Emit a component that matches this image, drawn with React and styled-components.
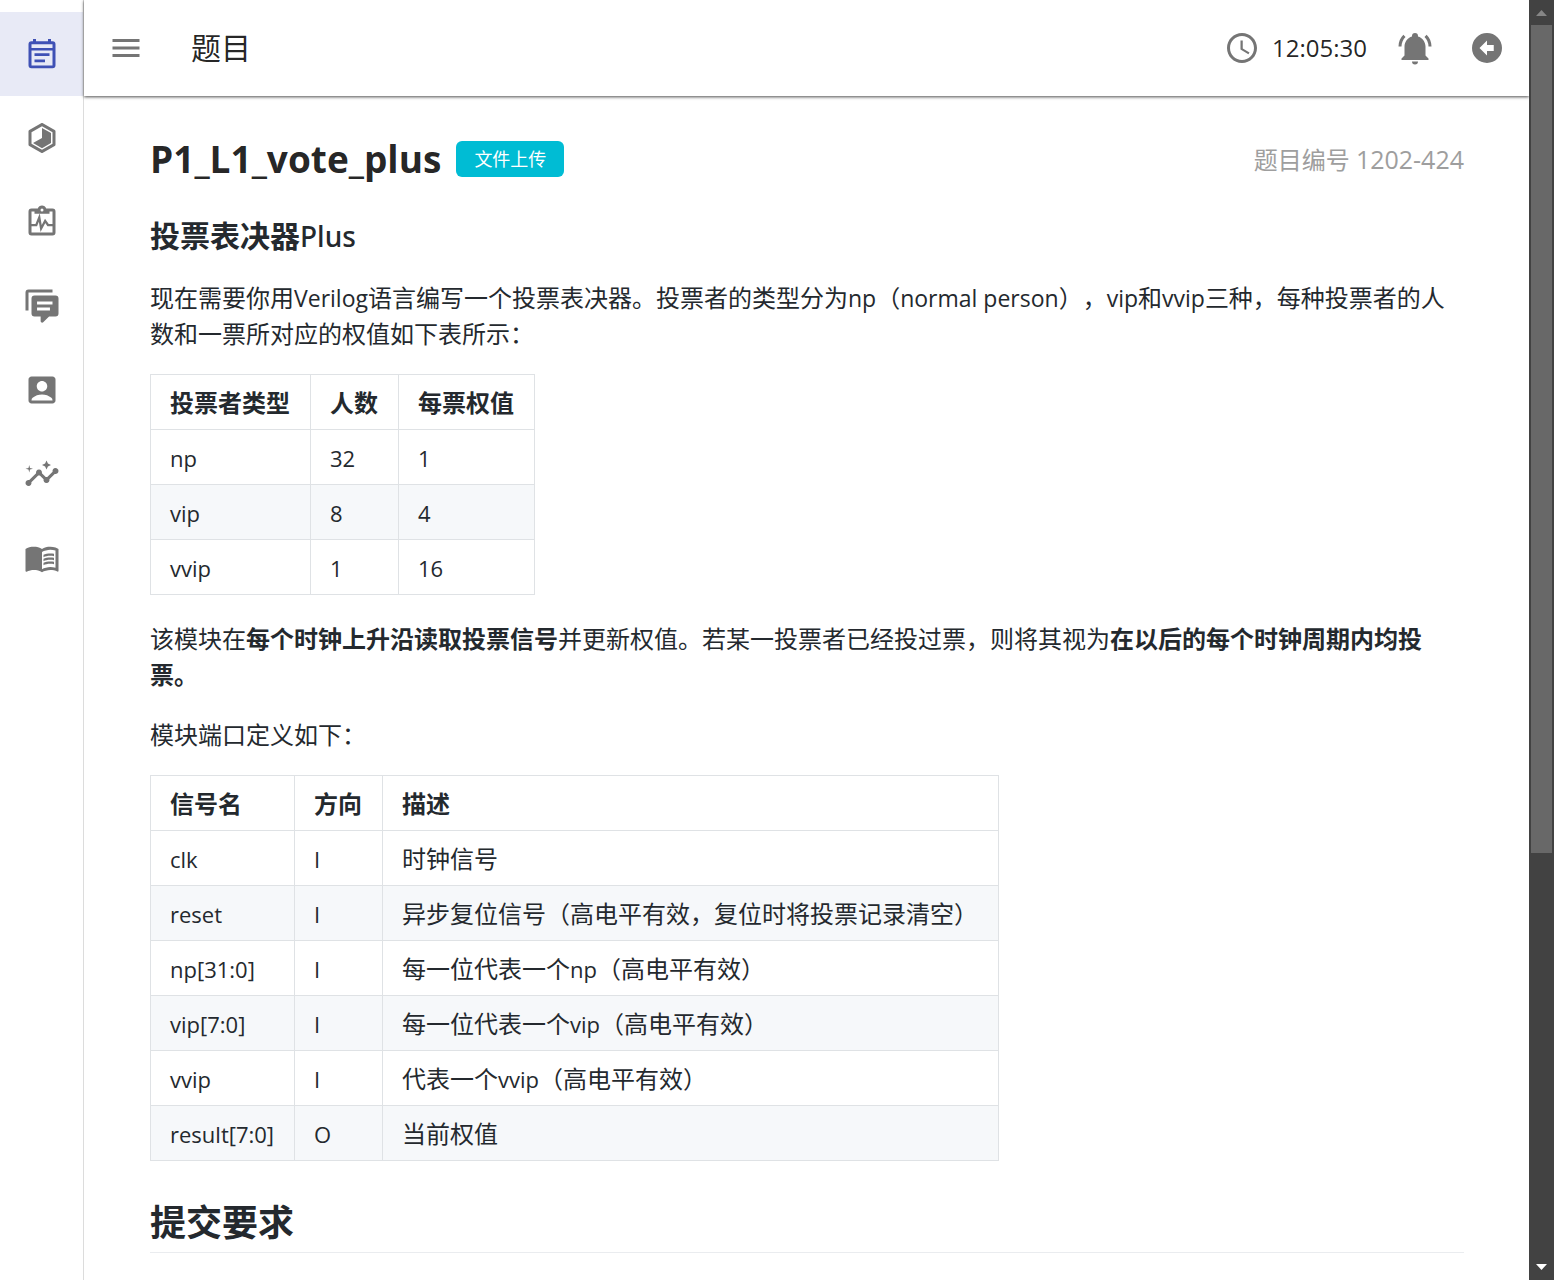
import React from "react";
import styled, { createGlobalStyle } from "styled-components";
import {
  MdAccountBox,
  MdInsights,
  MdMenuBook,
  MdAccessTime,
  MdMenu,
} from "react-icons/md";

const GlobalStyle = createGlobalStyle`
  *, *::before, *::after { box-sizing: border-box; }
  html, body { margin: 0; height: 100%; overflow: hidden; }
  #root { height: 100%; }
  body {
    background: #fff;
    color: rgba(0, 0, 0, 0.87);
    font: 24px/36px "Open Sans", "Noto Sans CJK SC", sans-serif;
    text-spacing-trim: space-all;
  }
`;

const Shell = styled.div`
  display: flex;
  height: 100vh;
`;

const Sidebar = styled.nav`
  flex: none;
  width: 84px;
  padding-top: 12px;
  border-right: 1px solid #dcdcdc;
`;

const NavItem = styled.a`
  display: flex;
  align-items: center;
  justify-content: center;
  height: 84px;
  color: ${(p) => (p.$active ? "#3f51b5" : "#757575")};
  background: ${(p) => (p.$active ? "#e8eaf6" : "transparent")};
  svg { width: 36px; height: 36px; }
`;

const Main = styled.div`
  display: flex;
  flex: 1;
  flex-direction: column;
  min-width: 0;
`;

const TopBar = styled.header`
  display: flex;
  flex: none;
  align-items: center;
  height: 96px;
  padding: 0 24px;
  box-shadow: 0 1px 3px rgba(0, 0, 0, 0.7);
`;

const IconButton = styled.button`
  display: flex;
  padding: 0;
  border: 0;
  background: none;
  color: #757575;
  svg { width: 36px; height: 36px; }
`;

const PageName = styled.div`
  flex: 1;
  padding-left: 47px;
  font-size: 30px;
`;

const Clock = styled.div`
  display: flex;
  align-items: center;
  gap: 12px;
  margin-right: 30px;
  svg { width: 36px; height: 36px; color: #757575; }
`;

const Actions = styled.div`
  display: flex;
  align-items: center;
  gap: 36px;
`;

const Content = styled.main`
  flex: 1;
  min-height: 0;
  overflow: hidden;
  padding: 39px 65px 0 66px;
`;

const TitleRow = styled.div`
  display: flex;
  align-items: center;
  height: 48px;
`;

const Title = styled.h1`
  margin: 0;
  font-size: 37px;
  line-height: 48px;
  font-weight: 700;
`;

const UploadTag = styled.span`
  margin-left: 15px;
  padding: 0 18px;
  border-radius: 6px;
  background: #00bcd4;
  color: #fff;
  font-size: 18px;
  line-height: 36px;
`;

const ProblemId = styled.span`
  margin-left: auto;
  color: #9e9e9e;
`;

const ProblemNumber = styled.span`
  font-size: 25px;
`;

const Article = styled.article`
  color: #24292e;
`;

const Heading3 = styled.h3`
  margin: 34px 0 25px;
  font-size: 30px;
  line-height: 38px;
  font-weight: 700;
`;

const HeadingLatin = styled.span`
  font-family: "Noto Sans", sans-serif;
  font-size: 28px;
  font-weight: 500;
`;

const Latin = styled.span`
  font-size: 23px;
  line-height: 1;
`;

const Paragraph = styled.p`
  margin: 0 0 22px;
  & + & { margin-top: 24px; }
`;

const Table = styled.table`
  width: ${(p) => p.$width}px;
  margin-bottom: 26px;
  border-collapse: collapse;
  table-layout: fixed;
  th, td {
    height: 55px;
    padding: 10px 19px 8px;
    border: 1px solid #dfe2e5;
    text-align: left;
    white-space: nowrap;
  }
  ${Latin} { font-size: 22px; }
  tbody tr:nth-child(even) { background: #f6f8fa; }
`;

const Heading2 = styled.h2`
  margin: 38px 0 24px;
  padding-bottom: 5px;
  border-bottom: 1px solid #eaecef;
  font-size: 36px;
  line-height: 48px;
`;

const Scrollbar = styled.div`
  display: flex;
  flex: none;
  flex-direction: column;
  align-items: center;
  width: 25px;
  background: #424242;
`;

const Thumb = styled.div`
  width: 21px;
  height: calc(100% * 828 / 1280);
  margin-bottom: auto;
  background: #686868;
`;

const ScrollArrow = styled.svg`
  flex: none;
  width: 25px;
  height: 25px;
`;

const CalendarText = () => (
  <svg viewBox="0 0 24 24" fill="currentColor">
    <path fillRule="evenodd" d="M6 2h2v1.500h8V2h2v1.500H19a2 2 0 0 1 2 2v14a2 2 0 0 1-2 2H5a2 2 0 0 1-2-2v-14a2 2 0 0 1 2-2h1zM5 5.500V8h14V5.500zm0 4.200v9.900h14V9.700z" />
    <path d="M7 11.500h10v1.900H7zM7 15.600h7v1.900H7z" />
  </svg>
);

const HexagonSlice = () => (
  <svg viewBox="0 0 24 24" fill="currentColor">
    <path d="M21 16.5c0 .38-.21.71-.53.88l-7.9 4.44c-.16.12-.36.18-.57.18s-.41-.06-.57-.18l-7.9-4.44A.99.99 0 0 1 3 16.5v-9c0-.38.21-.71.53-.88l7.9-4.44c.16-.12.36-.18.57-.18s.41.06.57.18l7.9 4.44c.32.17.53.5.53.88v9M12 4.15 5 8.09v7.82l7 3.94 7-3.94V8.09l-7-3.94z" />
    <path d="M12 5.25 18 8.65v6.7l-6 3.4-6-3.4L12 12z" />
  </svg>
);

const ClipboardPulse = () => (
  <svg viewBox="0 0 24 24" fill="currentColor">
    <path fillRule="evenodd" d="M19 3h-4.180C14.400 1.840 13.300 1 12 1s-2.400.840-2.820 2H5a2 2 0 0 0-2 2v14a2 2 0 0 0 2 2h14a2 2 0 0 0 2-2V5a2 2 0 0 0-2-2m-7 0a1 1 0 1 1 0 2 1 1 0 0 1 0-2M5 5h2v1.500h10V5h2v14H5z" />
    <path d="M4.500 14h3.700l2-5 1.200 7.300 2.700-5 1.900 2.700h3.500" fill="none" stroke="currentColor" strokeWidth="1.500" />
  </svg>
);

const Messages = () => (
  <svg viewBox="0 0 24 24" fill="currentColor">
    <path fillRule="evenodd" d="M7 5h14a2 2 0 0 1 2 2v10a2 2 0 0 1-2 2h-4.300l-3.900 3.800a1 1 0 0 1-1.700-.7V19H7a2 2 0 0 1-2-2V7a2 2 0 0 1 2-2zM8.700 9v2H19V9zm0 4v2h8.600v-2z" />
    <path d="M3 15H1V3a2 2 0 0 1 2-2h16v2H3z" />
  </svg>
);

const BellRing = () => (
  <svg viewBox="0 0 24 24" fill="currentColor">
    <path d="M21 19v1H3v-1l2-2v-6c0-3.100 2.030-5.830 5-6.710V4a2 2 0 0 1 4 0v.29c2.970.88 5 3.610 5 6.710v6l2 2m-7 2a2 2 0 0 1-4 0m9.750-17.810-1.420 1.420A8.980 8.980 0 0 1 21 11h2c0-2.930-1.160-5.750-3.250-7.810M1 11h2c0-2.400.96-4.700 2.670-6.390L4.250 3.190A10.960 10.960 0 0 0 1 11z" />
  </svg>
);

const BackCircle = () => (
  <svg viewBox="0 0 24 24" fill="currentColor">
    <path fillRule="evenodd" d="M22 12a10 10 0 1 1-20 0 10 10 0 0 1 20 0zm-15 0 5 5v-3h4.500v-4H12V7z" />
  </svg>
);

const NAV = [
  ["题目", CalendarText],
  ["进度", HexagonSlice],
  ["评测", ClipboardPulse],
  ["讨论", Messages],
  ["个人", MdAccountBox],
  ["统计", MdInsights],
  ["教程", MdMenuBook],
];

const VOTERS = {
  width: 385,
  columns: [["投票者类型", 160], ["人数", 88], ["每票权值", 136]],
  rows: [["np", "32", "1"], ["vip", "8", "4"], ["vvip", "1", "16"]],
};

const PORTS = {
  width: 849,
  columns: [["信号名", 144], ["方向", 88], ["描述", 616]],
  rows: [
    ["clk", "I", "时钟信号"],
    ["reset", "I", "异步复位信号（高电平有效，复位时将投票记录清空）"],
    ["np[31:0]", "I", "每一位代表一个np（高电平有效）"],
    ["vip[7:0]", "I", "每一位代表一个vip（高电平有效）"],
    ["vvip", "I", "代表一个vvip（高电平有效）"],
    ["result[7:0]", "O", "当前权值"],
  ],
};

/* Sets the Latin runs of a mixed-script string slightly smaller than the Chinese. */
const Mixed = ({ children }) =>
  children
    .split(/([\x20-\x7e]+)/)
    .filter(Boolean)
    .map((part, i) => (/^[\x20-\x7e]/.test(part) ? <Latin key={i}>{part}</Latin> : part));

const DataTable = ({ width, columns, rows }) => (
  <Table $width={width}>
    <colgroup>
      {columns.map(([name, w]) => <col key={name} width={w} />)}
    </colgroup>
    <thead>
      <tr>{columns.map(([name]) => <th key={name} scope="col">{name}</th>)}</tr>
    </thead>
    <tbody>
      {rows.map((row) => (
        <tr key={row[0]}>{row.map((cell, i) => <td key={i}><Mixed>{cell}</Mixed></td>)}</tr>
      ))}
    </tbody>
  </Table>
);

export default function App() {
  return (
    <>
      <GlobalStyle />
      <Shell>
        <Sidebar>
          {NAV.map(([label, Icon], i) => (
            <NavItem key={label} href="#" aria-label={label} $active={i === 0}>
              <Icon />
            </NavItem>
          ))}
        </Sidebar>
        <Main>
          <TopBar>
            <IconButton aria-label="菜单"><MdMenu /></IconButton>
            <PageName>题目</PageName>
            <Clock><MdAccessTime />12:05:30</Clock>
            <Actions>
              <IconButton aria-label="通知"><BellRing /></IconButton>
              <IconButton aria-label="返回"><BackCircle /></IconButton>
            </Actions>
          </TopBar>
          <Content>
            <TitleRow>
              <Title>P1_L1_vote_plus</Title>
              <UploadTag>文件上传</UploadTag>
              <ProblemId>题目编号 <ProblemNumber>1202-424</ProblemNumber></ProblemId>
            </TitleRow>
            <Article>
              <Heading3>投票表决器<HeadingLatin>Plus</HeadingLatin></Heading3>
              <Paragraph>
                <Mixed>现在需要你用Verilog语言编写一个投票表决器。投票者的类型分为np（normal person），vip和vvip三种，每种投票者的人数和一票所对应的权值如下表所示：</Mixed>
              </Paragraph>
              <DataTable {...VOTERS} />
              <Paragraph>
                该模块在<strong>每个时钟上升沿读取投票信号</strong>并更新权值。若某一投票者已经投过票，则将其视为<strong>在以后的每个时钟周期内均投票。</strong>
              </Paragraph>
              <Paragraph>模块端口定义如下：</Paragraph>
              <DataTable {...PORTS} />
              <Heading2>提交要求</Heading2>
            </Article>
          </Content>
        </Main>
        <Scrollbar aria-hidden="true">
          <ScrollArrow viewBox="0 0 25 25"><path d="M7 16h11l-5.500-6z" fill="#868686" /></ScrollArrow>
          <Thumb />
          <ScrollArrow viewBox="0 0 25 25"><path d="M7 9h11l-5.500 6z" fill="#fff" /></ScrollArrow>
        </Scrollbar>
      </Shell>
    </>
  );
}
